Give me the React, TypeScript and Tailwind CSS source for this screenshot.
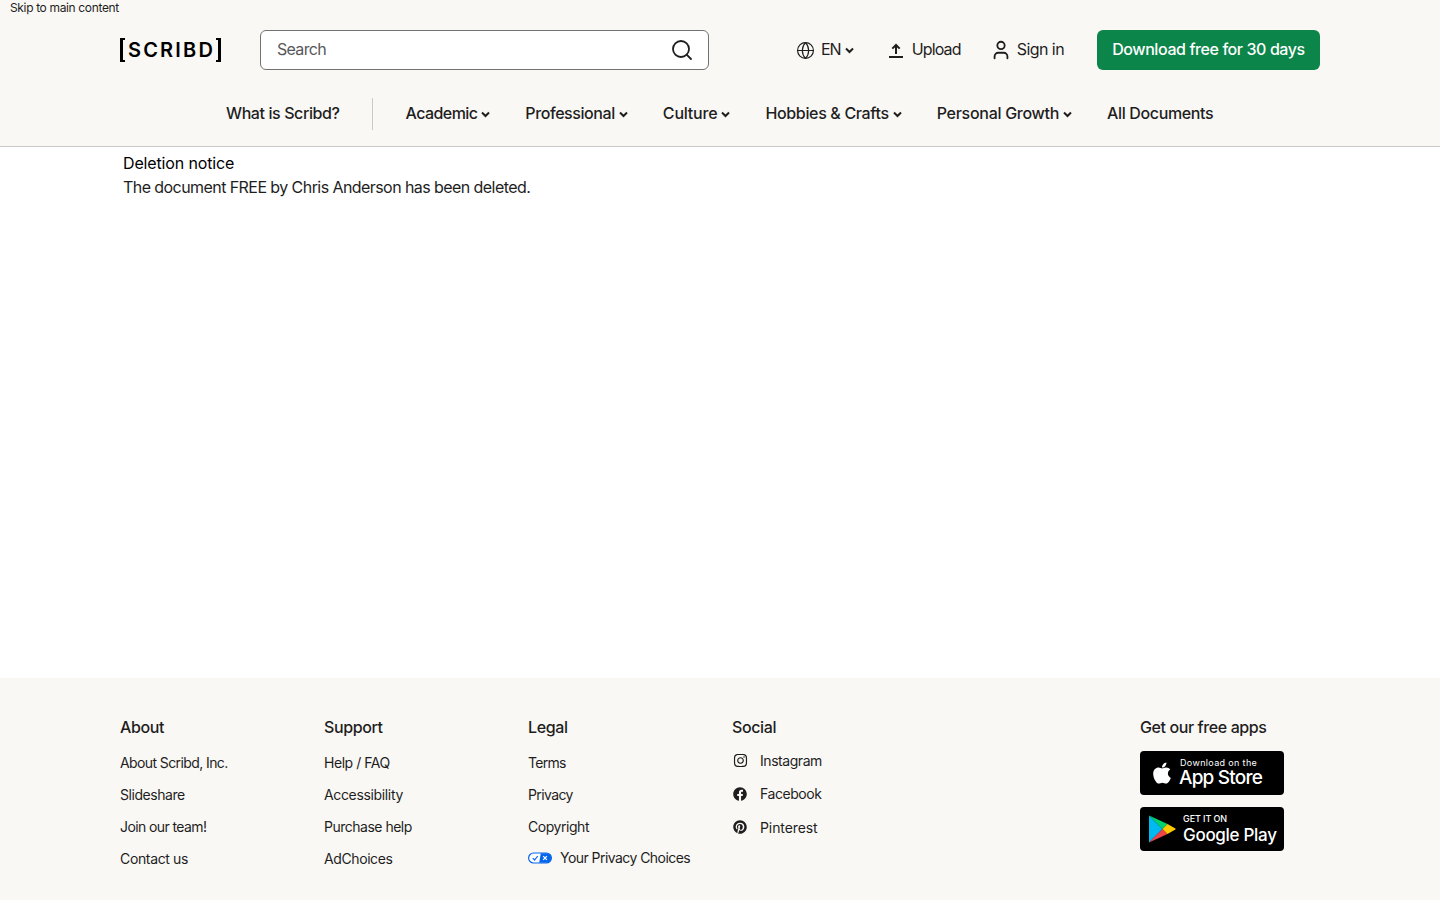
import React from "react";
import { Search, Globe, User } from "lucide-react";
import { FaInstagram, FaFacebook, FaPinterest, FaApple } from "react-icons/fa";

const navItems = [
  { label: "Academic", track: "tracking-[-0.59px]" },
  { label: "Professional", track: "tracking-[-0.42px]" },
  { label: "Culture", track: "tracking-[-0.2px]" },
  { label: "Hobbies & Crafts", track: "tracking-[-0.34px]" },
  { label: "Personal Growth", track: "tracking-[-0.29px]" },
];

const footerCols = [
  {
    title: "About",
    links: [
      { label: "About Scribd, Inc.", track: "tracking-[-0.6px]" },
      { label: "Slideshare", track: "tracking-[-0.45px]" },
      { label: "Join our team!", track: "tracking-[-0.6px]" },
      { label: "Contact us", track: "tracking-[-0.35px]" },
    ],
  },
  {
    title: "Support",
    links: [
      { label: "Help / FAQ", track: "tracking-[-0.45px]" },
      { label: "Accessibility", track: "tracking-[-0.35px]" },
      { label: "Purchase help", track: "tracking-[-0.5px]" },
      { label: "AdChoices", track: "tracking-[-0.4px]" },
    ],
  },
  {
    title: "Legal",
    links: [
      { label: "Terms", track: "tracking-[-0.7px]" },
      { label: "Privacy", track: "tracking-[-0.6px]" },
      { label: "Copyright", track: "tracking-[-0.45px]" },
    ],
  },
];

const Chevron = () => (
  <svg width="9" height="7" viewBox="0 0 9 7" fill="none" stroke="#1e1e1e" strokeWidth="2">
    <path d="M1 1.5l3.5 3.5L8 1.5" />
  </svg>
);

const PrivacyIcon = () => (
  <svg width="24" height="12" viewBox="0 0 30 14">
    <rect x="0.75" y="0.75" width="28.5" height="12.5" rx="6.25" fill="#fff" stroke="#0666eb" strokeWidth="1.5" />
    <path d="M16 1h7a6 6 0 0 1 0 12h-9z" fill="#0666eb" />
    <path d="M6 7.2l2.2 2.3 4-5" fill="none" stroke="#0666eb" strokeWidth="1.5" />
    <path d="M19 4.6l4.6 4.8M23.6 4.6L19 9.4" stroke="#fff" strokeWidth="1.5" />
  </svg>
);

const PlayIcon = () => (
  <svg width="28" height="30" viewBox="0 0 28 30">
    <path d="M1 1.5v27L14.5 15z" fill="#00b9f1" />
    <path d="M1 1.5L14.5 15l5-5z" fill="#00d36f" />
    <path d="M1 28.5L14.5 15l5 5z" fill="#ef4547" />
    <path d="M19.5 10l7 4a1 1 0 0 1 0 2l-7 4-5-5z" fill="#ffc900" />
  </svg>
);

export default function App() {
  return (
    <div className="relative flex min-h-[900px] flex-col bg-white font-['Inter',sans-serif] text-[#1e1e1e]">
      <a href="#main" className="absolute left-[10px] top-0 text-[12px] leading-[16px] tracking-[-0.35px] text-[#1e1e1e]">
        Skip to main content
      </a>

      <header className="h-[147px] border-b border-[#cacaca] bg-[#faf8f5]">
        <div className="mt-[30px] flex h-[40px] items-center pl-[120px] pr-[120px]">
          <a href="#" className="flex h-[24px] w-[101px] items-center justify-between">
            <span className="h-[24px] w-[5px] border-y-2 border-l-[3px] border-black" />
            <span className="pl-[2px] text-[20px] font-semibold leading-none tracking-[2.2px] text-black">SCRIBD</span>
            <span className="h-[24px] w-[5px] border-y-2 border-r-[3px] border-black" />
          </a>

          <div className="ml-[39px] flex h-[40px] w-[449px] items-center justify-between rounded-[6px] border border-[#727272] bg-white pl-[16px] pr-[14px]">
            <span className="pb-[2px] text-[16px] tracking-[-0.7px] text-[#57575a]">Search</span>
            <Search size={24} strokeWidth={1.8} className="text-[#1e1e1e]" />
          </div>

          <div className="ml-[87px] flex items-center">
            <Globe size={19} strokeWidth={1.5} />
            <span className="ml-[6px] pb-[2px] text-[16px] tracking-[-1px]">EN</span>
            <span className="ml-[4px]"><Chevron /></span>
          </div>

          <div className="ml-[34px] flex items-center gap-[8px]">
            <svg width="16" height="16" viewBox="0 0 16 16" fill="none" stroke="#1e1e1e" strokeWidth="2">
              <path d="M8 12V3M4.3 6.6L8 3l3.7 3.6M1 15h14" />
            </svg>
            <span className="pb-[2px] text-[16px] tracking-[-0.85px]">Upload</span>
          </div>

          <div className="ml-[29px] flex items-center gap-[5px]">
            <User size={22} strokeWidth={2} />
            <span className="pb-[2px] text-[16px] tracking-[-0.55px]">Sign in</span>
          </div>

          <a href="#" className="ml-auto flex h-[40px] w-[223px] items-center justify-center rounded-[6px] bg-[#0b8549] pb-[2px] text-[16px] font-medium tracking-[-0.41px] text-white">
            Download free for 30 days
          </a>
        </div>

        <nav className="mt-[28px] flex h-[32px] items-center text-[16px] font-medium text-[#1e1e1e] pl-[226px]">
          <a href="#" className="pb-[2px] tracking-[-0.4px]">What is Scribd?</a>
          <span className="ml-[32px] mr-[33px] h-[32px] w-px bg-[#cacaca]" />
          {navItems.map((item) => (
            <a key={item.label} href="#" className={`mr-[35px] flex items-center gap-[4px] ${item.track}`}>
              <span className="pb-[2px]">{item.label}</span>
              <Chevron />
            </a>
          ))}
          <a href="#" className="pb-[2px] tracking-[-0.36px]">All Documents</a>
        </nav>
      </header>

      <main id="main" className="h-[531px] pl-[123px] pt-[4px] text-[16px] leading-[24px]">
        <div className="tracking-[-0.15px] text-black">Deletion notice</div>
        <div className="tracking-[-0.57px] text-[#1e1e1e]">The document FREE by Chris Anderson has been deleted.</div>
      </main>

      <footer className="flex h-[222px] bg-[#faf8f5] pl-[120px] pr-[156px] pt-[39px]">
        {footerCols.map((col) => (
          <div key={col.title} className="w-[204px]">
            <h3 className="text-[16px] font-medium leading-[20px] tracking-[-0.39px] text-[#1e1e1e]">{col.title}</h3>
            <ul className="mt-[9px]">
              {col.links.map((link) => (
                <li key={link.label} className={`flex h-[32px] items-center text-[14px] text-[#1e1e1e] ${link.track}`}>
                  {link.label}
                </li>
              ))}
              {col.title === "Legal" && (
                <li className="flex h-[31px] items-center gap-[8px] whitespace-nowrap text-[14px] tracking-[-0.55px]">
                  <PrivacyIcon />
                  Your Privacy Choices
                </li>
              )}
            </ul>
          </div>
        ))}

        <div className="w-[204px]">
          <h3 className="text-[16px] font-medium leading-[20px] tracking-[-0.39px]">Social</h3>
          <ul className="mt-[7px] text-[14px]">
            <li className="flex h-[33px] items-center gap-[12px] tracking-[-0.45px]">
              <span className="flex w-[16px] justify-center"><FaInstagram size={15} /></span>
              Instagram
            </li>
            <li className="flex h-[33px] items-center gap-[12px] tracking-[-0.45px]">
              <span className="flex w-[16px] justify-center"><FaFacebook size={14} /></span>
              Facebook
            </li>
            <li className="flex h-[34px] items-center gap-[12px] tracking-[-0.1px]">
              <span className="flex w-[16px] justify-center"><FaPinterest size={14} /></span>
              Pinterest
            </li>
          </ul>
        </div>

        <div className="ml-auto w-[144px]">
          <h3 className="whitespace-nowrap text-[16px] font-medium leading-[20px] tracking-[-0.4px]">Get our free apps</h3>
          <a href="#" className="mt-[14px] flex h-[44px] items-center rounded-[4px] bg-black pl-[10px] text-white">
            <FaApple size={24} />
            <span className="ml-[5px] flex flex-col whitespace-nowrap">
              <span className="pl-px text-[9px] leading-[10px] tracking-[0.35px]">Download on the</span>
              <span className="text-[19px] font-medium leading-[20px] tracking-[-0.8px]">App Store</span>
            </span>
          </a>
          <a href="#" className="mt-[12px] flex h-[44px] items-center rounded-[4px] bg-black pl-[8px] text-white">
            <PlayIcon />
            <span className="ml-[7px] flex flex-col whitespace-nowrap">
              <span className="text-[9px] font-medium leading-[12px] tracking-[-0.1px]">GET IT ON</span>
              <span className="text-[17px] font-medium leading-[20px] tracking-[-0.3px]">Google Play</span>
            </span>
          </a>
        </div>
      </footer>
    </div>
  );
}
